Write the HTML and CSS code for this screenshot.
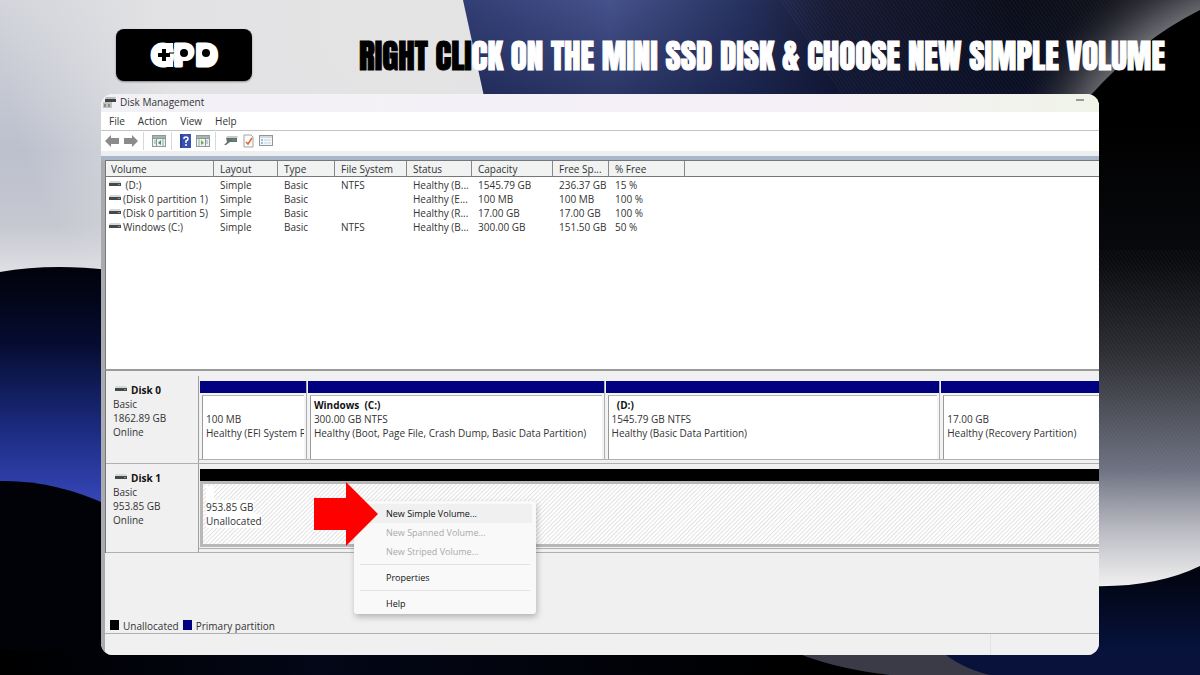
FILE: index.html
```html
<!DOCTYPE html>
<html lang="en">
<head>
    <meta charset="UTF-8">
    <meta name="viewport" content="width=device-width, initial-scale=1.0">
    <title>Disk Management</title>
    <link rel="stylesheet" href="styles.css">
</head>
<body>
    <svg class="backdrop" viewBox="0 0 1200 675" preserveAspectRatio="none" aria-hidden="true">
        <defs>
            <linearGradient id="silver" x1="0" y1="0" x2="0" y2="1">
                <stop offset="0" stop-color="#d3d5db"></stop>
                <stop offset="0.5" stop-color="#bcc0cd"></stop>
                <stop offset="0.75" stop-color="#c6c8d1"></stop>
                <stop offset="1" stop-color="#ededee"></stop>
            </linearGradient>
            <radialGradient id="silverTop" gradientUnits="userSpaceOnUse" cx="400" cy="20" r="400">
                <stop offset="0" stop-color="#e4e4e5"></stop>
                <stop offset="0.6" stop-color="#e2e2e4"></stop>
                <stop offset="1" stop-color="#e2e2e4" stop-opacity="0"></stop>
            </radialGradient>
            <linearGradient id="blueTop" x1="0" y1="0" x2="1" y2="0">
                <stop offset="0" stop-color="#323e74"></stop>
                <stop offset="0.2" stop-color="#45528b"></stop>
                <stop offset="0.38" stop-color="#273260"></stop>
                <stop offset="0.5" stop-color="#171a33"></stop>
                <stop offset="0.75" stop-color="#0a0c18"></stop>
                <stop offset="1" stop-color="#15161c"></stop>
            </linearGradient>
            <linearGradient id="blueShade" x1="0" y1="0" x2="0" y2="1">
                <stop offset="0" stop-color="#0a1236" stop-opacity="0"></stop>
                <stop offset="1" stop-color="#0a1236" stop-opacity="0.5"></stop>
            </linearGradient>
            <linearGradient id="blueLeft" x1="0" y1="0" x2="0" y2="1">
                <stop offset="0" stop-color="#01020a"></stop>
                <stop offset="0.3" stop-color="#050c30"></stop>
                <stop offset="0.65" stop-color="#1c2c82"></stop>
                <stop offset="1" stop-color="#3c4cc4"></stop>
            </linearGradient>
            <linearGradient id="rightGlow" x1="0" y1="0" x2="0" y2="1">
                <stop offset="0" stop-color="#000000"></stop>
                <stop offset="0.3" stop-color="#090a0e"></stop>
                <stop offset="0.5" stop-color="#2d2e33"></stop>
                <stop offset="0.75" stop-color="#6f7282"></stop>
                <stop offset="0.88" stop-color="#bcbdc4"></stop>
                <stop offset="1" stop-color="#f2f2f2"></stop>
            </linearGradient>
            <linearGradient id="navyCorner" x1="0" y1="0" x2="0" y2="1">
                <stop offset="0" stop-color="#01030c"></stop>
                <stop offset="1" stop-color="#08174c"></stop>
            </linearGradient>
            <linearGradient id="floor" x1="0" y1="0" x2="1" y2="0">
                <stop offset="0" stop-color="#000000"></stop>
                <stop offset="0.4" stop-color="#030717"></stop>
                <stop offset="1" stop-color="#000000"></stop>
            </linearGradient>
            <radialGradient id="rim" gradientUnits="userSpaceOnUse" cx="1270" cy="200" r="320">
                <stop offset="0.6" stop-color="#77787d"></stop>
                <stop offset="0.68" stop-color="#4a4b52"></stop>
                <stop offset="0.85" stop-color="#14151d" stop-opacity="0"></stop>
            </radialGradient>
            <pattern id="grain" width="3" height="3" patternUnits="userSpaceOnUse" patternTransform="rotate(-35)">
                <path d="M0 0V3" stroke="#ffffff" stroke-opacity="0.08"></path>
            </pattern>
        </defs>
        <rect width="1200" height="675" fill="#000000"></rect>
        <rect width="500" height="300" fill="url(#silver)"></rect>
        <rect width="500" height="300" fill="url(#silverTop)"></rect>
        <path d="M463 0H1200V110H487Z" fill="url(#blueTop)"></path>
        <path d="M463 0H1200V110H487Z" fill="url(#blueShade)"></path>
        <path d="M780 0H1200V110H850Z" fill="url(#grain)"></path>
        <path d="M950 0H1200V110H950Z" fill="url(#rim)"></path>
        <path d="M1200 10Q1140 40 1090 96V300H1200Z" fill="#000000"></path>
        <rect x="1090" y="120" width="110" height="468" fill="url(#rightGlow)"></rect>
        <rect x="1090" y="250" width="110" height="270" fill="url(#grain)"></rect>
        <path d="M1090 586Q1155 588 1200 566V675H1090Z" fill="url(#navyCorner)"></path>
        <path d="M0 272Q50 263 110 270V520H0Z" fill="url(#blueLeft)"></path>
        <path d="M0 481Q55 480 110 506V675H0Z" fill="#010208"></path>
        <rect y="650" width="800" height="25" fill="url(#floor)"></rect>
        <path d="M790 650Q830 668 890 675H1200V650Z" fill="#08123a"></path>
        <path d="M790 650Q830 668 890 675H990Q960 668 940 650Z" fill="#3a3b46"></path>
    </svg>

    <header class="banner">
        <svg class="logo" viewBox="0 0 136 52" role="img" aria-label="GPD">
            <text class="logo-text" x="35 58 80" y="37">GPD</text>
            <rect x="39" y="17" width="16" height="17" rx="8" fill="#ffffff"></rect>
            <rect x="48" y="14" width="9" height="24" fill="#ffffff"></rect>
            <path d="M46 20H50V24H54V28H50V32H46V28H42V24H46Z" fill="#000000"></path>
            <path d="M53 24H58" stroke="#000000"></path>
            <rect x="64" y="17" width="10" height="10" fill="#ffffff"></rect>
            <rect x="84" y="17" width="10" height="18" fill="#ffffff"></rect>
            <circle cx="68" cy="24" r="4" fill="#000000"></circle>
            <circle cx="90" cy="24" r="4" fill="#000000"></circle>
        </svg>
        <h1 class="headline"><span class="headline-dark">RIGHT CLI</span>CK ON THE MINI SSD DISK &amp; CHOOSE NEW SIMPLE VOLUME</h1>
    </header>

    <svg class="symbols" aria-hidden="true">
        <symbol id="drive" viewBox="0 0 12 8">
            <path d="M1 1H11L12 3H0Z" fill="#d5d8d8"></path>
            <rect y="3" width="12" height="3" fill="#45494b"></rect>
            <rect x="9" y="4" width="2" height="1" fill="#6aa58c"></rect>
        </symbol>
    </svg>

    <main class="window">
        <div class="title-bar">
            <svg class="app-icon" viewBox="0 0 14 12">
                <path d="M3 1H13L12 3H2Z" fill="#b9bcbd"></path>
                <path d="M2 3H13V6H8V8H2Z" fill="#3e4344"></path>
                <path d="M0 6H9V12H0Z" fill="#c2c2c0"></path>
                <path d="M2 8V11M6 8V11" stroke="#555555"></path>
            </svg>
            <span class="title-text">Disk Management</span>
            <button class="minimize" aria-label="Minimize">
                <svg width="10" height="2" viewBox="0 0 10 2"><path d="M1 1H9" stroke="#444444"></path></svg>
            </button>
        </div>

        <nav class="menu-bar">
            <button>File</button>
            <button>Action</button>
            <button>View</button>
            <button>Help</button>
        </nav>

        <div class="toolbar">
            <button aria-label="Back">
                <svg width="14" height="12" viewBox="0 0 14 12"><path d="M0 6L6 0V3H14V9H6V12Z" fill="#8b8b8b"></path></svg>
            </button>
            <button aria-label="Forward">
                <svg width="14" height="12" viewBox="0 0 14 12"><path d="M14 6L8 0V3H0V9H8V12Z" fill="#8b8b8b"></path></svg>
            </button>
            <span class="divider"></span>
            <button aria-label="Show console tree">
                <svg width="14" height="12" viewBox="0 0 14 12">
                    <rect width="14" height="12" fill="#8d9a99"></rect>
                    <path d="M1 4H4V11H1ZM5 4H13V11H5Z" fill="#edf3ee"></path>
                    <path d="M1 2H13" stroke="#c2cdcb"></path>
                    <path d="M2 6H4M2 8H4M11 4V11" stroke="#91a5a0"></path>
                    <path d="M9 5V10L6 8Z" fill="#42975a"></path>
                </svg>
            </button>
            <span class="divider"></span>
            <button aria-label="Help">
                <svg width="11" height="14" viewBox="0 0 11 14">
                    <rect width="11" height="14" fill="#3850ae"></rect>
                    <path d="M1 0V14" stroke="#20317c"></path>
                    <path d="M4 5V4Q4 3 6 3T8 5Q8 6 6 7V9M6 10V12" fill="none" stroke="#ffffff" stroke-width="1.5"></path>
                </svg>
            </button>
            <button aria-label="Show action pane">
                <svg width="14" height="12" viewBox="0 0 14 12">
                    <rect width="14" height="12" fill="#8d9a99"></rect>
                    <path d="M1 4H9V11H1ZM10 4H13V11H10Z" fill="#edf3ee"></path>
                    <path d="M1 2H13" stroke="#c2cdcb"></path>
                    <path d="M10 6H12M10 8H12M3 4V11" stroke="#91a5c0"></path>
                    <path d="M5 5V10L8 8Z" fill="#6fae3d"></path>
                </svg>
            </button>
            <span class="divider"></span>
            <button aria-label="Refresh disks">
                <svg width="14" height="10" viewBox="0 0 14 10">
                    <path d="M3 0H14L13 2H2Z" fill="#c4c9ca"></path>
                    <path d="M2 2H13V6H6L2 9H0L3 6Z" fill="#65716c"></path>
                    <path d="M8 4H12" stroke="#5b9c7c"></path>
                </svg>
            </button>
            <button aria-label="Check">
                <svg width="11" height="14" viewBox="0 0 11 14">
                    <path d="M1 1H8L10 3V13H1Z" fill="#fbfbfb" stroke="#a5a5a5"></path>
                    <path d="M3 8L5 10L9 4" fill="none" stroke="#d8683a" stroke-width="1.5"></path>
                </svg>
            </button>
            <button aria-label="Properties">
                <svg width="14" height="12" viewBox="0 0 14 12">
                    <rect x="0.5" y="0.5" width="13" height="10" fill="#f4f8fb" stroke="#8c979f"></rect>
                    <path d="M1 2H13" stroke="#b2bcc6"></path>
                    <path d="M2 5H4M2 8H4" stroke="#4f86bd"></path>
                    <path d="M5 5H12M5 8H12" stroke="#ccd3d8"></path>
                </svg>
            </button>
        </div>

        <div class="content">
            <div class="volume-list">
                <table class="volumes">
                    <colgroup>
                        <col class="col-volume">
                        <col class="col-layout">
                        <col class="col-type">
                        <col class="col-fs">
                        <col class="col-status">
                        <col class="col-capacity">
                        <col class="col-free">
                        <col class="col-percent">
                        <col>
                    </colgroup>
                    <thead>
                        <tr>
                            <th>Volume</th><th>Layout</th><th>Type</th><th>File System</th><th>Status</th><th>Capacity</th><th>Free Sp...</th><th>% Free</th><th></th>
                        </tr>
                    </thead>
                    <tbody>
                        <tr>
                            <td><svg class="drive"><use href="#drive"></use></svg>&nbsp;(D:)</td><td>Simple</td><td>Basic</td><td>NTFS</td><td>Healthy (B...</td><td>1545.79 GB</td><td>236.37 GB</td><td>15 %</td><td></td>
                        </tr>
                        <tr>
                            <td><svg class="drive"><use href="#drive"></use></svg>(Disk 0 partition 1)</td><td>Simple</td><td>Basic</td><td></td><td>Healthy (E...</td><td>100 MB</td><td>100 MB</td><td>100 %</td><td></td>
                        </tr>
                        <tr>
                            <td><svg class="drive"><use href="#drive"></use></svg>(Disk 0 partition 5)</td><td>Simple</td><td>Basic</td><td></td><td>Healthy (R...</td><td>17.00 GB</td><td>17.00 GB</td><td>100 %</td><td></td>
                        </tr>
                        <tr>
                            <td><svg class="drive"><use href="#drive"></use></svg>Windows (C:)</td><td>Simple</td><td>Basic</td><td>NTFS</td><td>Healthy (B...</td><td>300.00 GB</td><td>151.50 GB</td><td>50 %</td><td></td>
                        </tr>
                    </tbody>
                </table>
            </div>

            <section class="disks">
                <div class="disk">
                    <div class="disk-label">
                        <h2><svg class="drive"><use href="#drive"></use></svg>Disk 0</h2>
                        <p>Basic</p>
                        <p>1862.89 GB</p>
                        <p>Online</p>
                    </div>
                    <div class="partitions">
                        <div class="partition">
                            <div class="partition-box">
                                <h3>&nbsp;</h3>
                                <p>100 MB</p>
                                <p>Healthy (EFI System F</p>
                            </div>
                        </div>
                        <div class="partition">
                            <div class="partition-box">
                                <h3>Windows &nbsp;(C:)</h3>
                                <p>300.00 GB NTFS</p>
                                <p>Healthy (Boot, Page File, Crash Dump, Basic Data Partition)</p>
                            </div>
                        </div>
                        <div class="partition">
                            <div class="partition-box">
                                <h3>&nbsp; (D:)</h3>
                                <p>1545.79 GB NTFS</p>
                                <p>Healthy (Basic Data Partition)</p>
                            </div>
                        </div>
                        <div class="partition">
                            <div class="partition-box">
                                <h3>&nbsp;</h3>
                                <p>17.00 GB</p>
                                <p>Healthy (Recovery Partition)</p>
                            </div>
                        </div>
                    </div>
                </div>

                <div class="disk">
                    <div class="disk-label">
                        <h2><svg class="drive"><use href="#drive"></use></svg>Disk 1</h2>
                        <p>Basic</p>
                        <p>953.85 GB</p>
                        <p>Online</p>
                    </div>
                    <div class="partitions partitions-single">
                        <div class="partition unallocated">
                            <div class="partition-box">
                                <h3><span>&nbsp; &nbsp;</span></h3>
                                <p><span>953.85 GB</span></p>
                                <p><span>Unallocated</span></p>
                            </div>
                        </div>
                    </div>

                    <div class="context-menu">
                        <button class="active">New Simple Volume...</button>
                        <button disabled>New Spanned Volume...</button>
                        <button disabled>New Striped Volume...</button>
                        <hr>
                        <button>Properties</button>
                        <hr>
                        <button>Help</button>
                    </div>
                    <svg class="pointer" viewBox="0 0 64 64" aria-hidden="true">
                        <path d="M0 16H32V0L64 32L32 64V48H0Z" fill="#fe0000"></path>
                    </svg>
                </div>
            </section>

            <div class="legend">
                <span class="swatch swatch-black"></span>Unallocated
                <span class="swatch swatch-blue"></span>Primary partition
            </div>
            <footer class="status-bar"><span></span></footer>
        </div>
    </main>
</body>
</html>
```

FILE: styles.css
```css
* {
    box-sizing: border-box;
}
body {
    margin: 0;
    min-height: 100vh;
    display: flex;
    flex-direction: column;
    font-family: "Open Sans", "Noto Sans", sans-serif;
    font-size: 10px;
    line-height: 14px;
    color: #333333;
    background-color: #000000;
}
h1, h2, h3, p {
    margin: 0;
    font-size: inherit;
}
button {
    padding: 0;
    border: none;
    background: none;
    font: inherit;
    color: inherit;
    cursor: pointer;
}
svg {
    display: block;
    flex-shrink: 0;
}
.backdrop {
    position: absolute;
    top: 0;
    left: 0;
    z-index: -1;
    width: 100%;
    height: 100%;
}
.symbols {
    position: absolute;
    width: 0;
    height: 0;
}

/* Banner */
.banner {
    display: flex;
    justify-content: space-between;
    align-items: center;
    padding: 29px 35px 13px 116px;
}
.logo {
    width: 136px;
    height: 52px;
    border-radius: 8px;
    background-color: #000000;
    box-shadow: 0 1px 2px rgba(0, 0, 0, 0.4);
}
.logo-text {
    font-family: Inter, sans-serif;
    font-size: 30px;
    font-weight: 900;
    fill: #ffffff;
    stroke: #ffffff;
    stroke-width: 3px;
    stroke-linejoin: round;
}
.headline {
    padding-top: 2px;
    font-family: Impact, Anton, "Liberation Sans Narrow", sans-serif;
    font-size: 33px;
    font-weight: 400;
    line-height: 40px;
    white-space: nowrap;
    color: #ffffff;
    -webkit-text-stroke: 1px currentColor;
}
.headline-dark {
    color: #000000;
}

/* Window */
.window {
    flex: 1;
    display: flex;
    flex-direction: column;
    margin: 0 101px 20px;
    border-radius: 12px;
    overflow: hidden;
    background-color: #ffffff;
}
.title-bar {
    display: flex;
    align-items: center;
    height: 18px;
    padding: 0 14px 2px 2px;
    background: linear-gradient(to right, #f2f1f6, #f5eff7 70%, #f0f4e8);
}
.app-icon {
    width: 14px;
    height: 12px;
}
.title-text {
    flex: 1;
    padding-left: 3px;
}
.minimize {
    padding-bottom: 4px;
}
.menu-bar {
    display: flex;
    gap: 13px;
    height: 19px;
    padding: 0 8px;
    border-bottom: 1px solid #c4c4c4;
}
.toolbar {
    display: flex;
    align-items: center;
    gap: 5px;
    height: 20px;
    padding: 0 4px;
}
.divider {
    width: 1px;
    height: 18px;
    margin-right: 3px;
    background-color: #d5d9dc;
}
.content {
    flex: 1;
    display: flex;
    flex-direction: column;
    padding-left: 4px;
    border-top: 5px solid #eceeef;
    background: linear-gradient(#a8b6c8, #a8b6c8 4px, #a9abae 5px, #a9abae);
    padding-top: 4px;
}

/* Volume list */
.volume-list {
    flex: 1;
    border-top: 1px solid #777777;
    border-left: 1px solid #777777;
    background-color: #ffffff;
}
.volumes {
    width: 100%;
    table-layout: fixed;
    border-collapse: separate;
    border-spacing: 0;
}
.col-volume { width: 108px; }
.col-layout { width: 64px; }
.col-type { width: 57px; }
.col-fs { width: 72px; }
.col-status { width: 65px; }
.col-capacity { width: 81px; }
.col-free { width: 56px; }
.col-percent { width: 76px; }
.volumes th {
    height: 16px;
    padding: 0 0 0 6px;
    border-right: 1px solid #888888;
    border-bottom: 1px solid #777777;
    background-color: #f1f2f2;
    font-weight: 400;
    line-height: 14px;
    text-align: left;
    white-space: nowrap;
}
.volumes th:first-child {
    padding-left: 5px;
}
.volumes th:last-child {
    border-right: none;
}
.volumes td {
    height: 14px;
    padding: 0 0 0 6px;
    white-space: nowrap;
}
.volumes tbody tr:first-child td {
    padding-top: 1px;
}
.volumes td:first-child {
    padding-left: 3px;
}
.drive {
    display: inline-block;
    width: 12px;
    height: 8px;
    margin-right: 2px;
    vertical-align: 1px;
}

/* Disk view */
.disks {
    padding-top: 5px;
    border-top: 2px solid #9a9a9a;
    border-left: 1px solid #777777;
    background-color: #f0f0f0;
}
.disk {
    position: relative;
    display: flex;
    height: 88px;
    border-bottom: 1px solid #b0b0b0;
}
.disk + .disk {
    height: 89px;
}
.disk-label {
    width: 93px;
    padding: 7px;
    border-right: 1px solid #a0a0a0;
}
.disk-label h2 {
    padding-left: 2px;
    color: #111111;
}
.disk-label .drive {
    margin-right: 4px;
}
.partition h3 {
    color: #111111;
}
.partitions {
    flex: 1;
    display: grid;
    grid-template-columns: 106fr 296fr 334fr 158fr;
    gap: 2px;
    margin: 5px 0 3px;
    padding-left: 1px;
    border-bottom: 1px solid #b0b0b0;
}
.partitions-single {
    grid-template-columns: 1fr;
}
.partition {
    min-width: 0;
    border-top: 12px solid #000080;
    background-color: #f4f4f4;
    box-shadow: 1px 0 0 #b0b0b0;
}
.partition:last-child {
    box-shadow: none;
}
.partition-box {
    height: 64px;
    margin: 2px 2px 0;
    padding: 2px 3px;
    border-top: 1px solid #b5b5b5;
    border-left: 1px solid #999999;
    background-color: #ffffff;
    white-space: nowrap;
    overflow: hidden;
}
.partition:last-child .partition-box {
    margin-right: 0;
}
.partition.unallocated {
    border-top-color: #000000;
}
.unallocated .partition-box {
    height: 66px;
    margin: 0;
    border: 3px solid #b8b8b8;
    border-right: none;
    background: repeating-linear-gradient(135deg, #ffffff 0, #ffffff 1px, #e2e2e2 2px, #ffffff 3px);
}
.unallocated span {
    background-color: #ffffff;
}

/* Menu over the unallocated space */
.context-menu {
    position: absolute;
    top: 37px;
    left: 248px;
    width: 182px;
    padding: 3px 4px 1px;
    border-radius: 3px;
    background-color: #f9f9f9;
    box-shadow: 1px 3px 6px rgba(0, 0, 0, 0.25);
    font-size: 9px;
    color: #111111;
}
.context-menu button {
    display: block;
    width: 100%;
    height: 19px;
    padding-left: 28px;
    text-align: left;
}
.context-menu .active {
    background-color: #f0f0f0;
}
.context-menu button:disabled {
    color: #aaaaaa;
}
.context-menu hr {
    height: 1px;
    margin: 3px 2px;
    border: none;
    background-color: #e3e3e3;
}
.pointer {
    position: absolute;
    top: 18px;
    left: 208px;
    width: 64px;
    height: 64px;
}

/* Legend and status bar */
.legend {
    display: flex;
    align-items: flex-end;
    gap: 4px;
    height: 81px;
    padding: 0 4px 0 5px;
    border-bottom: 1px solid #b0b0b0;
    background-color: #f0f0f0;
}
.swatch {
    width: 9px;
    height: 10px;
    margin-bottom: 3px;
}
.swatch-black { background-color: #000000; }
.swatch-blue { background-color: #000080; }
.status-bar {
    display: flex;
    justify-content: flex-end;
    height: 21px;
    padding-right: 108px;
    background-color: #f0f0f0;
}
.status-bar span {
    width: 1px;
    background-color: #e2e2e2;
}
```
